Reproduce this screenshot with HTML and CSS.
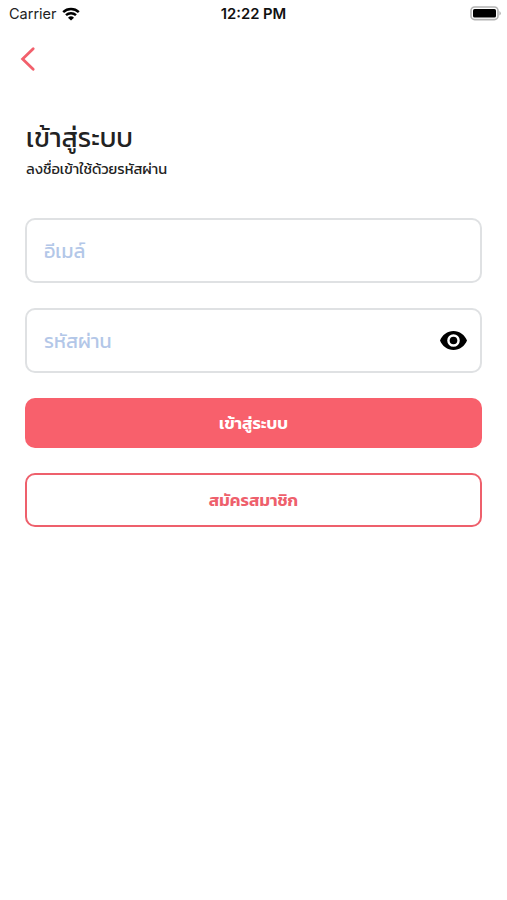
FILE: index.html
```html
<!DOCTYPE html>
<html lang="th">
<head>
    <meta charset="UTF-8">
    <meta name="viewport" content="width=device-width, initial-scale=1.0">
    <title>เข้าสู่ระบบ</title>
    <link rel="stylesheet" href="styles.css">
</head>
<body>
    <div class="status-bar">
        <div class="carrier">
            <span>Carrier</span>
            <svg class="wifi-icon" width="18" height="14" viewBox="0 0 18 14">
                <path d="M1.200 5.200a11.400 11.400 0 0 1 15.600 0M4 8.200a7.400 7.400 0 0 1 10 0" fill="none" stroke="#000" stroke-width="2.5"/>
                <path d="M9 13.600 6 10.700a4.400 4.400 0 0 1 6 0z"/>
            </svg>
        </div>
        <div class="clock">12:22 PM</div>
        <svg class="battery-icon" width="31" height="15" viewBox="0 0 31 15">
            <rect x="1" y="1" width="27" height="12.6" rx="3.6" fill="#fff" stroke="#b3b3b3" stroke-width="1.6"/>
            <rect x="3" y="3" width="23" height="8.6" rx="1.6"/>
            <path d="M29.400 5v4.600q1.400-.7 1.400-2.300T29.400 5z" fill="#b3b3b3"/>
        </svg>
    </div>

    <div class="nav">
        <button class="back-btn" aria-label="Back">
            <svg width="16" height="26" viewBox="0 0 16 26">
                <path d="M13.200 2.700 2.600 13l10.600 10.300" fill="none" stroke="#f2606c" stroke-width="2.8" stroke-linecap="round"/>
            </svg>
        </button>
    </div>

    <div class="container">
        <h1>เข้าสู่ระบบ</h1>
        <p class="subtitle">ลงชื่อเข้าใช้ด้วยรหัสผ่าน</p>

        <form class="login-form">
            <div class="field">
                <input class="email-input" type="email" placeholder="อีเมล์">
            </div>
            <div class="field">
                <input class="password-input" type="password" placeholder="รหัสผ่าน">
                <svg class="eye-icon" width="27" height="19" viewBox="0 0 27 19">
                    <path fill-rule="evenodd" d="M13.500 0C7.400 0 2.200 3.900 0 9.500 2.200 15.100 7.400 19 13.500 19S24.800 15.100 27 9.500C24.800 3.900 19.600 0 13.500 0zm0 15.800a6.300 6.300 0 1 1 0-12.600 6.300 6.300 0 0 1 0 12.600z"/>
                    <circle cx="13.5" cy="9.5" r="3.8"/>
                </svg>
            </div>
            <button type="button" class="btn btn-primary"><span class="login-label">เข้าสู่ระบบ</span></button>
            <button type="button" class="btn btn-outline"><span class="register-label">สมัครสมาชิก</span></button>
        </form>
    </div>
</body>
</html>
```

FILE: styles.css
```css
* {
    margin: 0;
    padding: 0;
    box-sizing: border-box;
}

body {
    font-family: Kanit, Prompt, "Noto Sans Thai", "Noto Sans", sans-serif;
    background: #fff;
    color: #222;
}

.status-bar {
    display: grid;
    grid-template-columns: 1fr auto 1fr;
    align-items: center;
    height: 27px;
    padding: 0 6px 0 9px;
    font-family: Inter, sans-serif;
    font-size: 14.5px;
}

.carrier {
    display: flex;
    align-items: center;
    gap: 5px;
}

.clock {
    margin-right: 3px;
    font-size: 14.8px;
    font-weight: 600;
    color: #111;
}

.battery-icon {
    justify-self: end;
}

.nav {
    height: 63px;
    padding: 19px 20px 0;
}

.back-btn {
    display: block;
    border: none;
    background: none;
    cursor: pointer;
}

.back-btn svg {
    display: block;
}

.container {
    padding: 32px 25px 0;
}

h1 {
    height: 34px;
    padding-left: 1px;
    font-size: 26.7px;
    font-weight: 400;
    line-height: 32px;
    white-space: nowrap;
}

.subtitle {
    height: 26px;
    padding-left: 1px;
    font-size: 14.6px;
    line-height: 27px;
    white-space: nowrap;
}

.login-form {
    display: flex;
    flex-direction: column;
    gap: 25px;
    margin-top: 36px;
}

.field {
    display: flex;
    align-items: center;
    height: 65px;
    padding: 0 13px 0 17px;
    border: 2px solid #dfe1e3;
    border-radius: 10px;
}

.field input {
    flex: 1;
    min-width: 0;
    height: 100%;
    border: none;
    outline: none;
    background: none;
    font-family: inherit;
    font-size: 19.8px;
}

.field input::placeholder {
    color: #b3c7e8;
    opacity: 1;
}

.btn {
    border-radius: 10px;
    font-family: inherit;
    font-size: 16.8px;
    font-weight: 600;
    cursor: pointer;
}

.btn-primary {
    height: 50px;
    border: none;
    background: #f8606c;
    color: #fff;
}

.btn-outline {
    height: 54px;
    border: 2px solid #ee606c;
    background: #fff;
    color: #ee606c;
}
```
